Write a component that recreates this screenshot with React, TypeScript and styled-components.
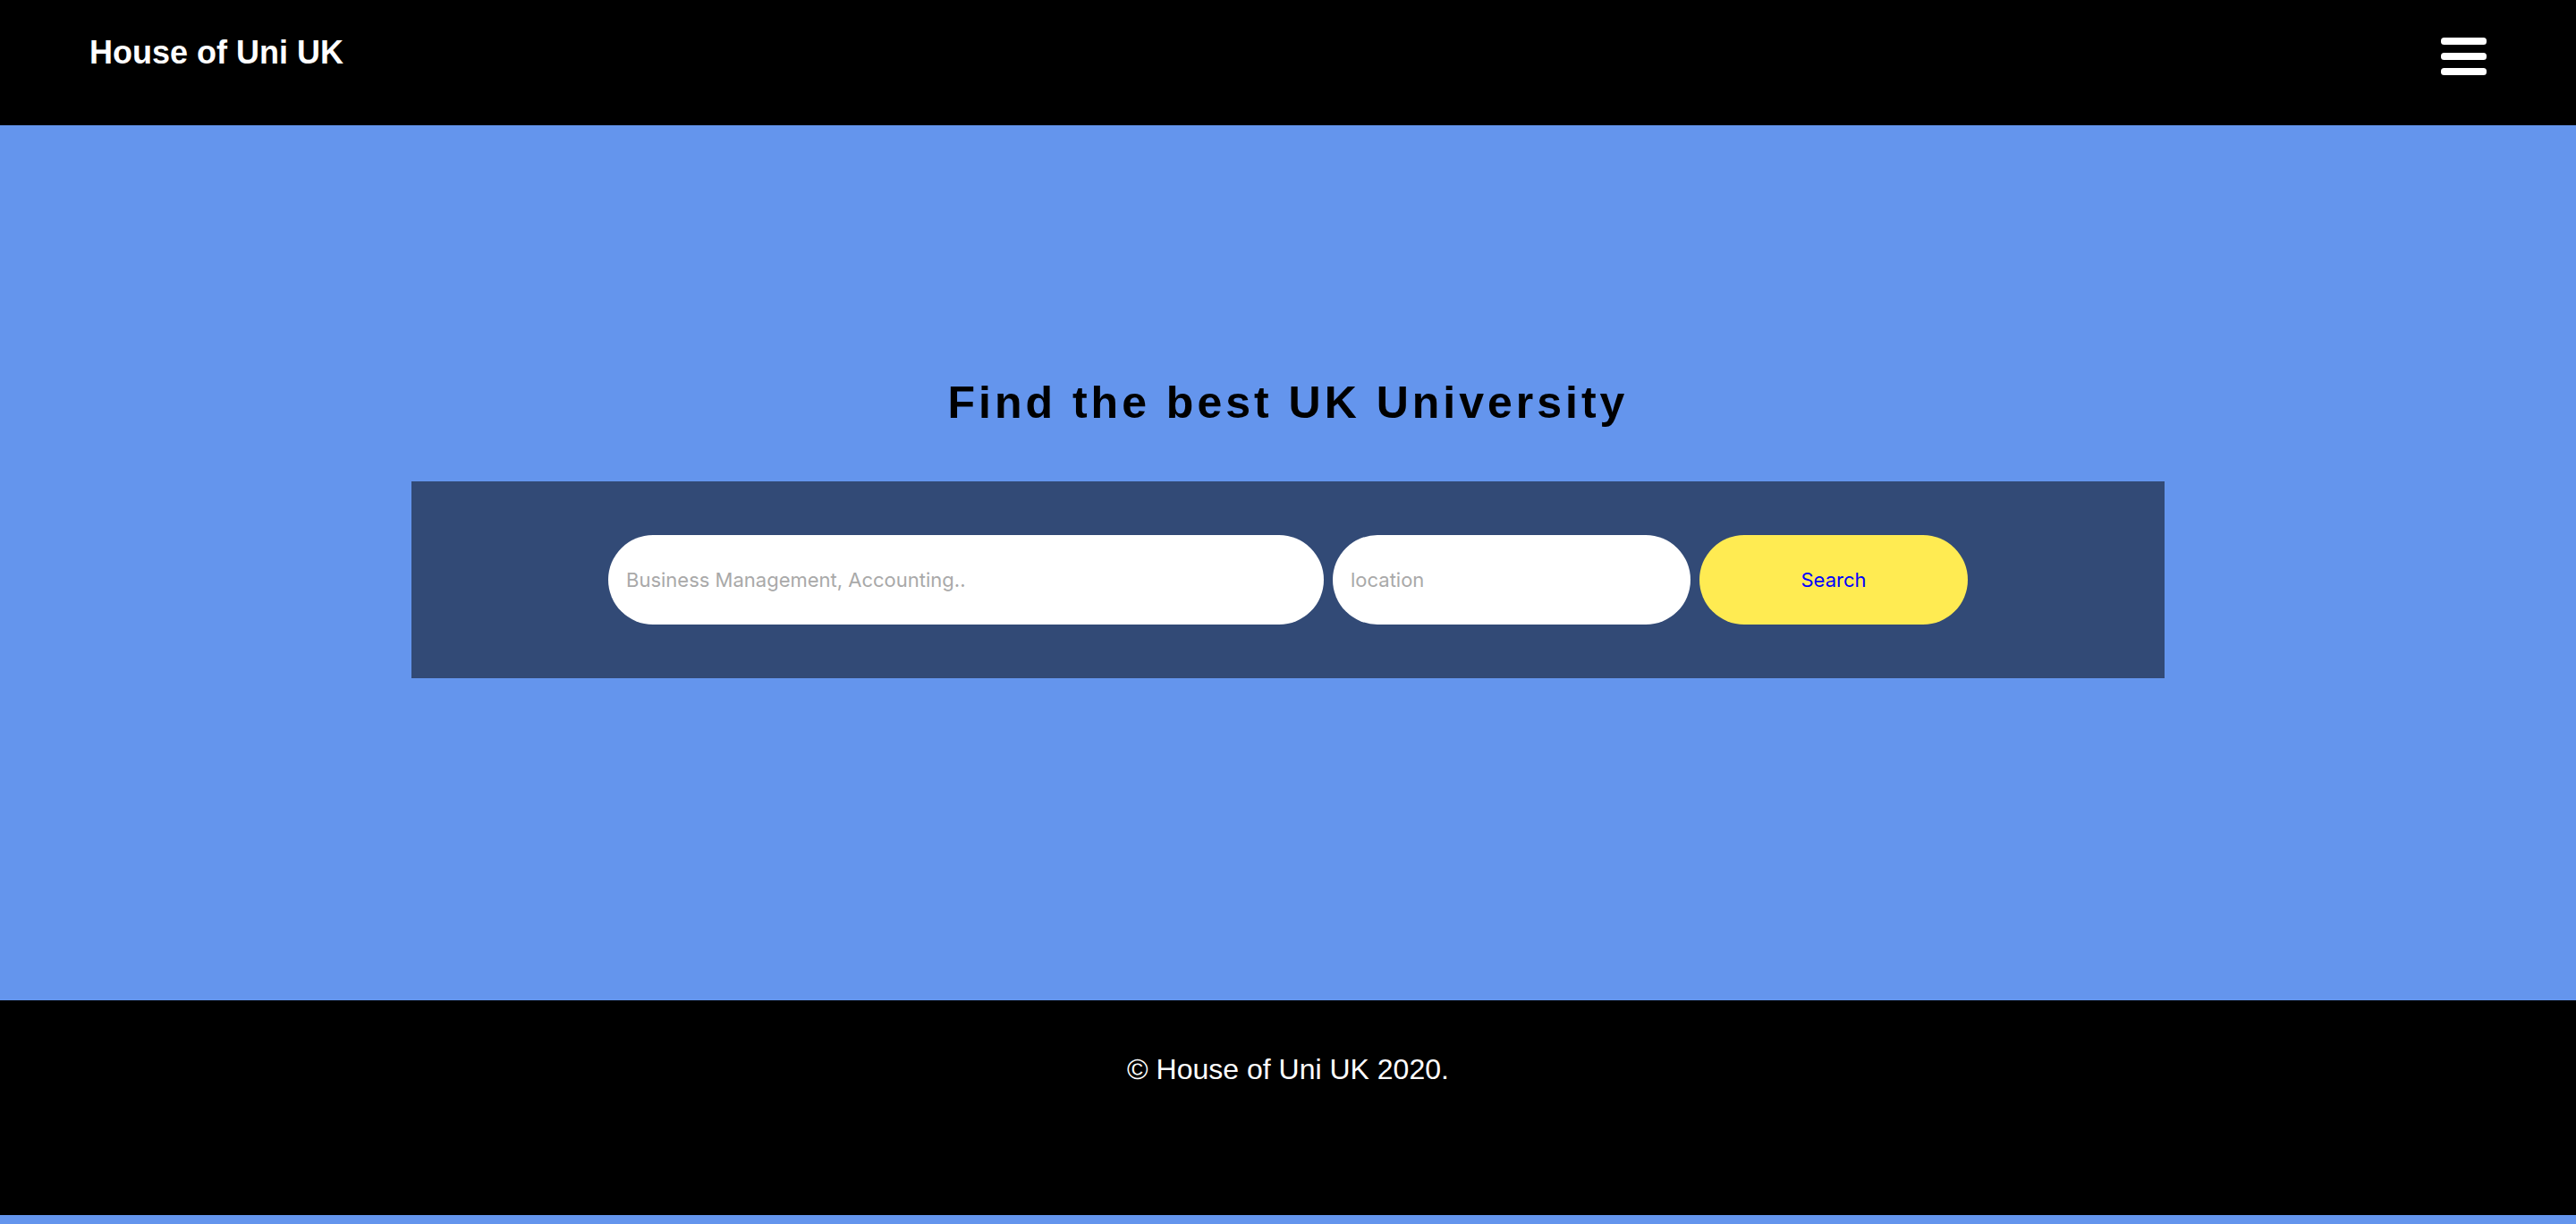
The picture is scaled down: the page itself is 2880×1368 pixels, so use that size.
import React from "react";
import styled, { createGlobalStyle } from "styled-components";

const GlobalStyle = createGlobalStyle`
  html, body {
    margin: 0;
    padding: 0;
    background: #6495ed;
    font-family: "Liberation Sans", Arial, Helvetica, sans-serif;
  }
  * { box-sizing: border-box; }
`;

const Page = styled.div`
  display: flex;
  flex-direction: column;
  width: 100%;
`;

const Header = styled.header`
  height: 140px;
  background: #000;
  display: flex;
  align-items: center;
  justify-content: space-between;
  padding: 0 100px 22px 100px;
`;

const Brand = styled.a`
  color: #fff;
  font-size: 36px;
  font-weight: 700;
  text-decoration: none;
  line-height: normal;
`;

const MenuButton = styled.button`
  background: none;
  border: none;
  padding: 0;
  margin-top: 7px;
  display: flex;
  cursor: pointer;
`;

const Hero = styled.main`
  height: 978px;
  padding-top: 282px;
  display: flex;
  flex-direction: column;
  align-items: center;
`;

const Title = styled.h1`
  margin: 0;
  font-size: 50px;
  line-height: 56px;
  font-weight: 700;
  letter-spacing: 4px;
  color: #000;
`;

const SearchPanel = styled.form`
  margin-top: 60px;
  width: 1960px;
  height: 220px;
  background: rgba(0, 0, 0, 0.5);
  display: flex;
  align-items: center;
  justify-content: center;
  gap: 10px;
`;

const Field = styled.input<{ $w: number }>`
  width: ${(p) => p.$w}px;
  height: 100px;
  border: none;
  outline: none;
  border-radius: 50px;
  background: #fff;
  padding: 0 20px;
  font-family: Inter, "Liberation Sans", sans-serif;
  font-size: 22px;
  color: #333;
  &::placeholder {
    color: #a9a9a9;
  }
`;

const SearchButton = styled.button`
  width: 300px;
  height: 100px;
  border: none;
  border-radius: 50px;
  background: #ffeb52;
  color: #0000ff;
  font-family: Inter, "Liberation Sans", sans-serif;
  font-size: 22px;
  cursor: pointer;
`;

const Footer = styled.footer`
  height: 240px;
  background: #000;
  padding-top: 59px;
  display: flex;
  justify-content: center;
  align-items: flex-start;
`;

const Copy = styled.p`
  margin: 0;
  color: #fff;
  font-size: 32px;
  line-height: normal;
`;

const BarsIcon = () => (
  <svg width="51" height="42" viewBox="0 0 51 42" aria-hidden="true">
    <rect x="0" y="0" width="51" height="8" rx="3.5" fill="#fff" />
    <rect x="0" y="17" width="51" height="8" rx="3.5" fill="#fff" />
    <rect x="0" y="34" width="51" height="8" rx="3.5" fill="#fff" />
  </svg>
);

export default function App() {
  return (
    <>
      <GlobalStyle />
      <Page>
        <Header>
          <Brand href="#">House of Uni UK</Brand>
          <MenuButton type="button" aria-label="Menu">
            <BarsIcon />
          </MenuButton>
        </Header>
        <Hero>
          <Title>Find the best UK University</Title>
          <SearchPanel onSubmit={(e) => e.preventDefault()}>
            <Field $w={800} type="text" placeholder="Business Management, Accounting.." />
            <Field $w={400} type="text" placeholder="location" />
            <SearchButton type="submit">Search</SearchButton>
          </SearchPanel>
        </Hero>
        <Footer>
          <Copy>© House of Uni UK 2020.</Copy>
        </Footer>
      </Page>
    </>
  );
}
